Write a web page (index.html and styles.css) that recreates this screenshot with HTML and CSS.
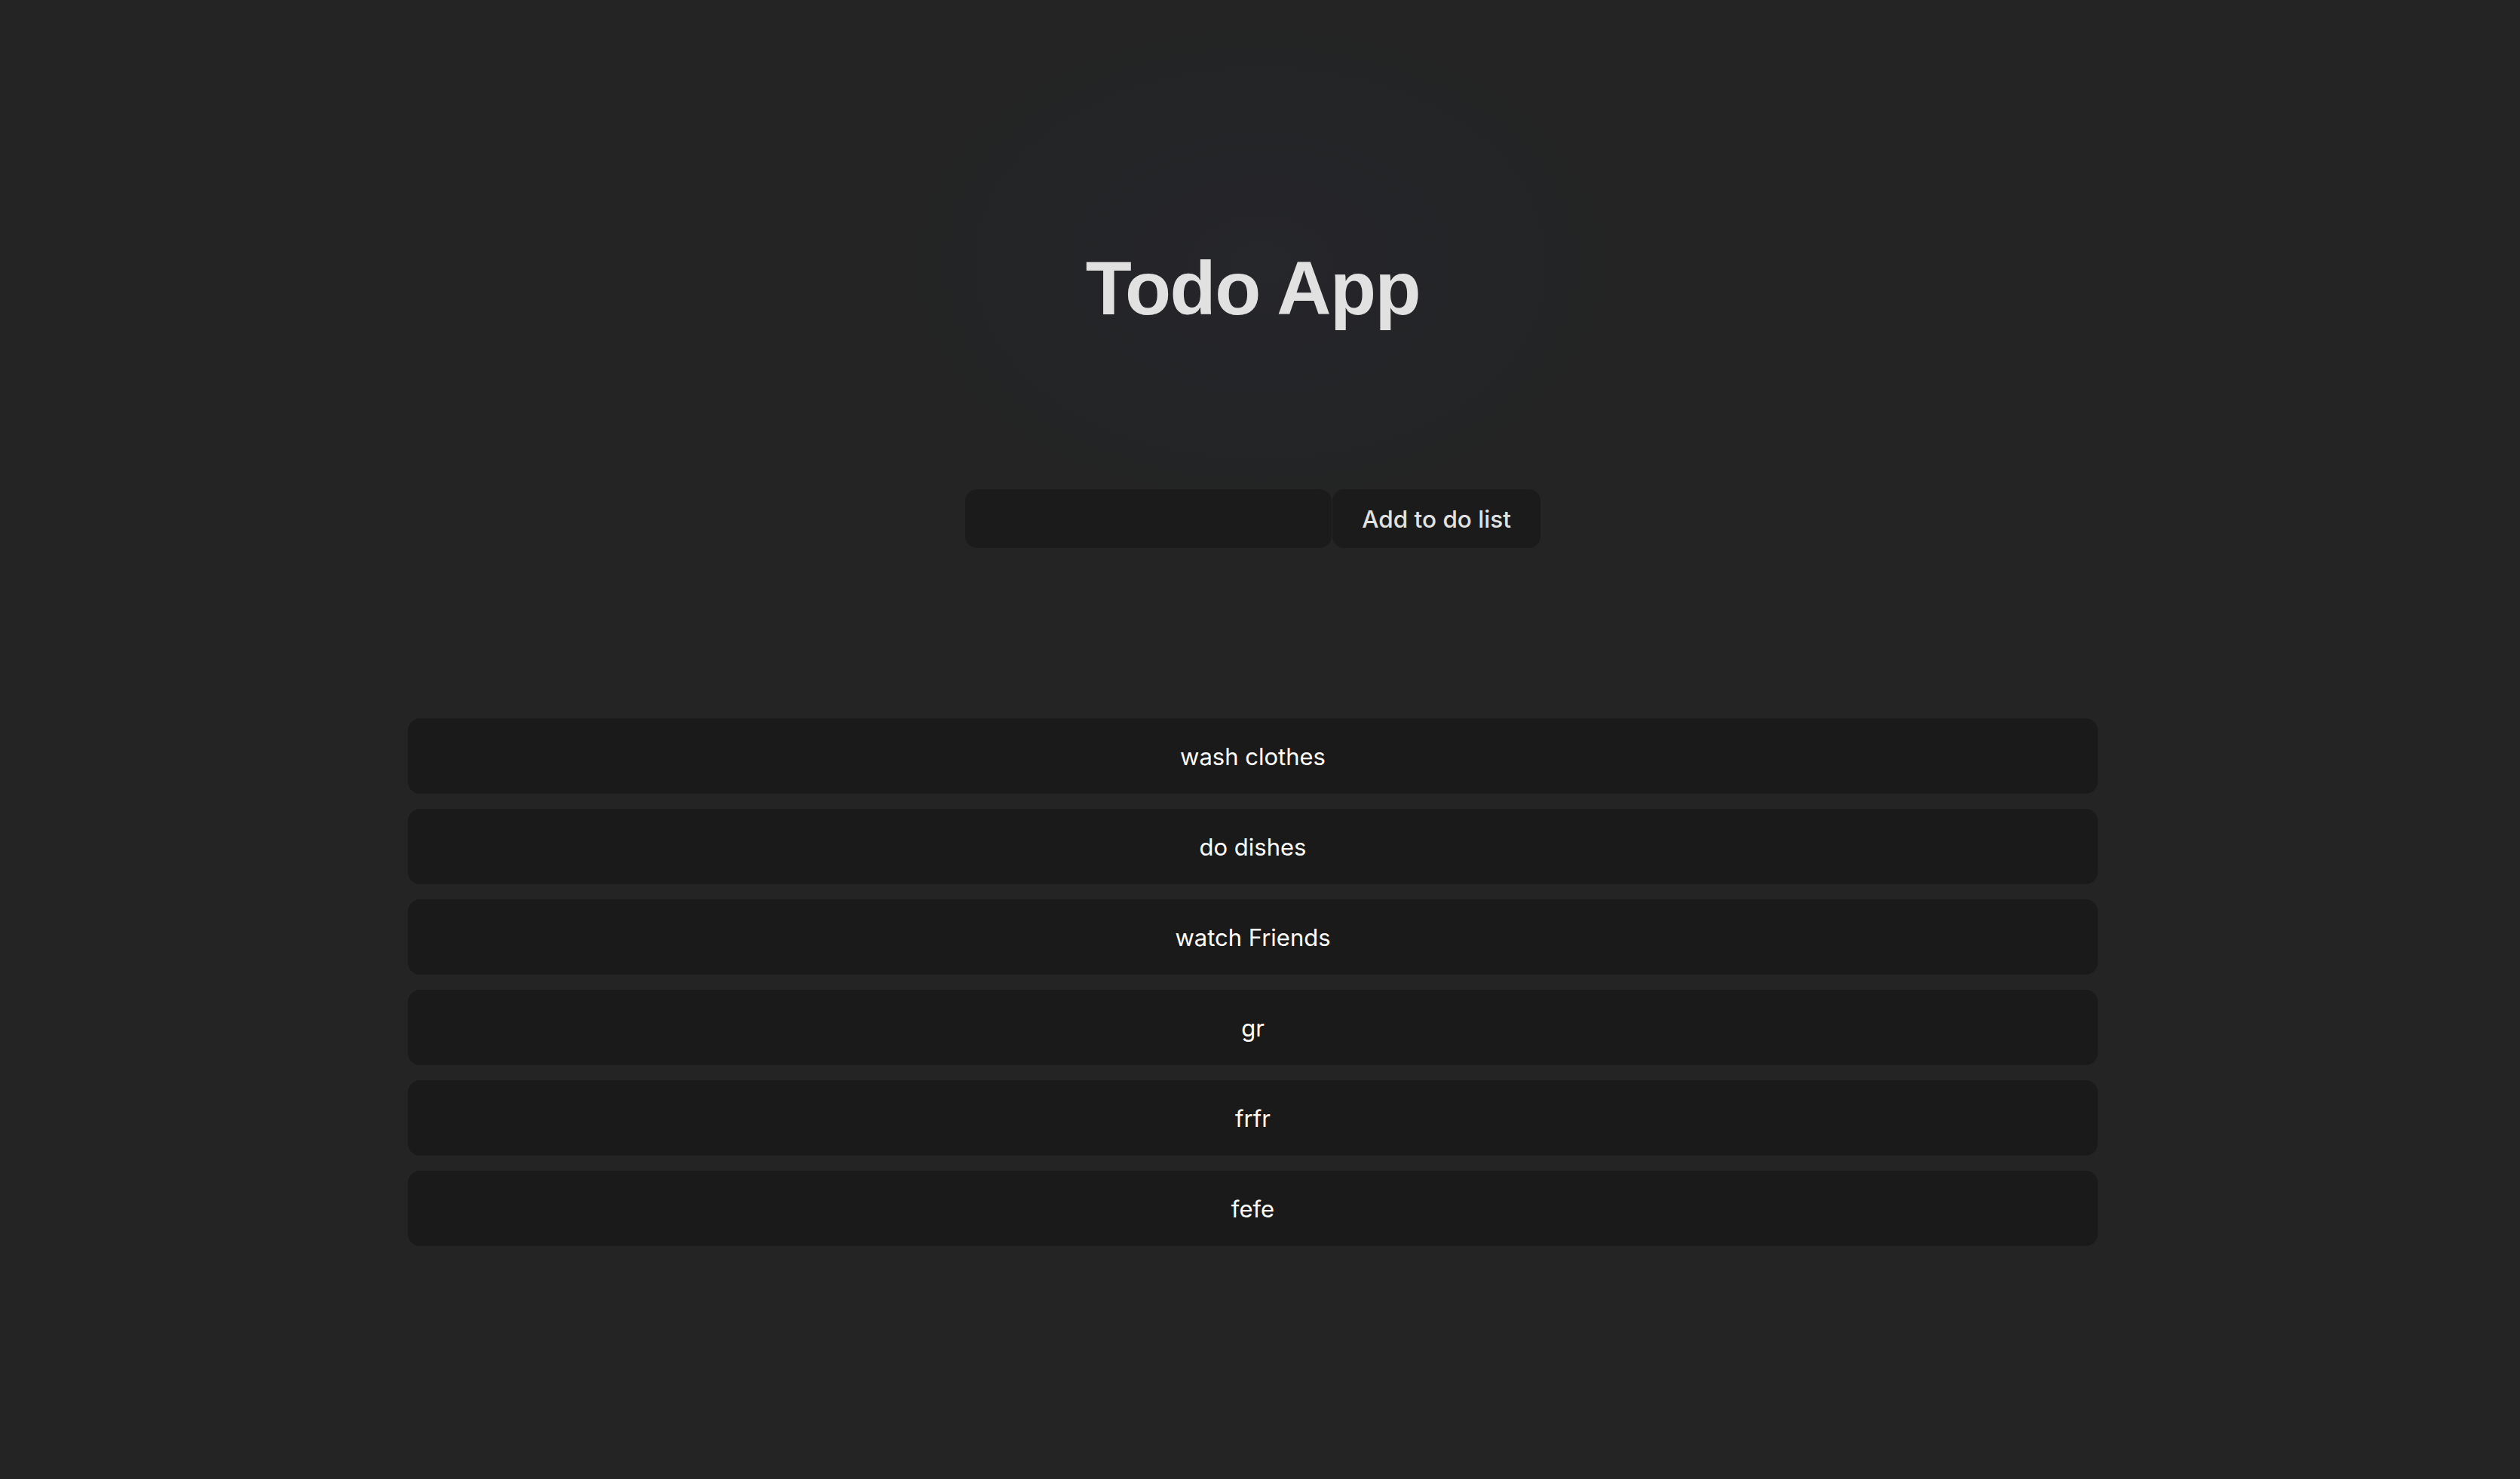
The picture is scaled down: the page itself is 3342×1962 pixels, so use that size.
FILE: index.html
```html
<!DOCTYPE html>
<html lang="en">
<head>
<meta charset="utf-8">
<title>Todo App</title>
<link rel="stylesheet" href="styles.css">
</head>
<body>
<div class="app">
  <header class="header">
    <h1 class="title">Todo App</h1>
  </header>
  <form class="add-form">
    <input class="add-input" type="text" aria-label="New todo">
    <button class="add-button" type="button">Add to do list</button>
  </form>
  <ul class="todo-list">
    <li class="todo-item">wash clothes</li>
    <li class="todo-item">do dishes</li>
    <li class="todo-item">watch Friends</li>
    <li class="todo-item">gr</li>
    <li class="todo-item">frfr</li>
    <li class="todo-item">fefe</li>
  </ul>
</div>
</body>
</html>
```

FILE: styles.css
```css
html, body {
  margin: 0;
  padding: 0;
}

body {
  min-height: 1962px;
  background-color: #242424;
  background-image: radial-gradient(ellipse 470px 320px at 1672px 350px, #26272b 0%, #252529 30%, #242527 60%, #232425 85%, #242424 100%);
  background-repeat: no-repeat;
  color: rgba(255, 255, 255, 0.87);
  font-family: Inter, "Noto Sans", "Liberation Sans", sans-serif;
}

.app {
  width: 2241px;
  margin-left: 541px;
  padding-top: 327px;
  display: flex;
  flex-direction: column;
  align-items: center;
}

.header {
  display: flex;
  justify-content: center;
}

.title {
  margin: 0;
  font-family: "Liberation Sans", Arial, sans-serif;
  font-weight: 700;
  font-size: 100px;
  line-height: 110px;
  letter-spacing: -1.5px;
  color: #e1e1e1;
}

.add-form {
  margin-top: 212px;
  display: flex;
  align-items: stretch;
}

.add-input {
  width: 486px;
  height: 78px;
  box-sizing: border-box;
  border: none;
  border-radius: 16px;
  background: #1b1b1b;
  padding: 0 20px;
  font-family: inherit;
  font-size: 32px;
  color: #e1e1e1;
  outline: none;
}

.add-button {
  width: 276px;
  height: 78px;
  margin-left: 1px;
  box-sizing: border-box;
  border: none;
  border-radius: 16px;
  background: #1b1b1b;
  font-family: inherit;
  font-size: 31.5px;
  font-weight: 500;
  color: #e1e1e1;
  padding: 0;
}

.todo-list {
  list-style: none;
  margin: 226px 0 0 0;
  padding: 0;
  width: 100%;
  display: flex;
  flex-direction: column;
  gap: 20px;
}

.todo-item {
  height: 100px;
  border-radius: 16px;
  background: #1a1a1a;
  display: flex;
  align-items: center;
  justify-content: center;
  font-size: 31px;
  color: #ffffff;
}
```
